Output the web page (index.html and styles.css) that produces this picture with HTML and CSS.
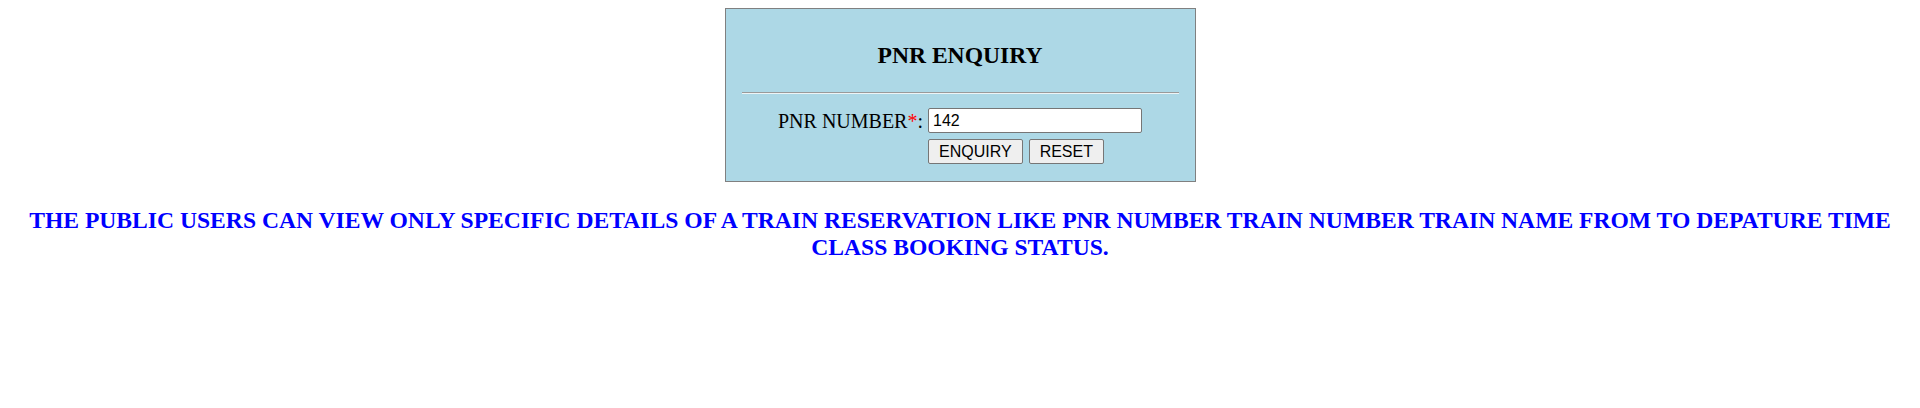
FILE: index.html
```html
<!DOCTYPE html>
<html>
<head>
<meta charset="utf-8">
<title>PNR Enquiry</title>
<link rel="stylesheet" href="styles.css">
</head>
<body>
<div class="panel">
  <h2 class="panel-title">PNR ENQUIRY</h2>
  <hr class="divider">
  <form class="enquiry-form">
    <label class="field-label" for="pnr">PNR NUMBER<span class="req">*</span>:</label>
    <input class="field-input" id="pnr" type="text" value="142">
    <div class="spacer"></div>
    <div class="actions">
      <button type="button" class="btn">ENQUIRY</button>
      <button type="reset" class="btn">RESET</button>
    </div>
  </form>
</div>
<h2 class="notice">THE PUBLIC USERS CAN VIEW ONLY SPECIFIC DETAILS OF A TRAIN RESERVATION LIKE PNR NUMBER TRAIN NUMBER TRAIN NAME FROM TO DEPATURE TIME CLASS BOOKING STATUS.</h2>
</body>
</html>
```
FILE: styles.css
```css
html, body {
  background: #ffffff;
}
body {
  margin: 8px;
  font-family: "Liberation Serif", "Times New Roman", serif;
  color: #000000;
}
.panel {
  width: 469px;
  margin: 0 auto;
  border: 1px solid #808080;
  background: #add8e6;
  padding: 32px 0 17px 0;
}
.panel-title {
  margin: 0;
  font-size: 23.6px;
  line-height: 28px;
  font-weight: bold;
  text-align: center;
}
.divider {
  margin: 23px 16px 0 16px;
  height: 0;
  border: 0;
  border-top: 1px solid #9a9a9a;
  border-bottom: 1px solid #eef4f6;
}
.enquiry-form {
  margin-top: 14px;
  display: grid;
  grid-template-columns: auto auto;
  grid-template-rows: 25px 25px;
  justify-content: center;
  column-gap: 5px;
  row-gap: 6px;
  align-items: start;
}
.field-label {
  font-size: 20px;
  line-height: 23px;
  padding-top: 2px;
  text-align: right;
}
.req {
  color: #ff0000;
}
.field-input {
  box-sizing: border-box;
  width: 214px;
  height: 25px;
  margin: 0;
  padding: 1px 4px;
  border: 1px solid #767676;
  border-radius: 2px;
  background: #ffffff;
  font-family: "Liberation Sans", Arial, sans-serif;
  font-size: 16px;
  color: #000000;
}
.actions {
  display: flex;
  gap: 6px;
}
.btn {
  box-sizing: border-box;
  height: 25px;
  margin: 0;
  padding: 0 10px;
  border: 1px solid #767676;
  border-radius: 2px;
  background: #efefef;
  font-family: "Liberation Sans", Arial, sans-serif;
  font-size: 16px;
  color: #000000;
}
.notice {
  margin: 25px 0 0 0;
  font-size: 23.6px;
  line-height: 27px;
  font-weight: bold;
  color: #0000ff;
  text-align: center;
}
```
